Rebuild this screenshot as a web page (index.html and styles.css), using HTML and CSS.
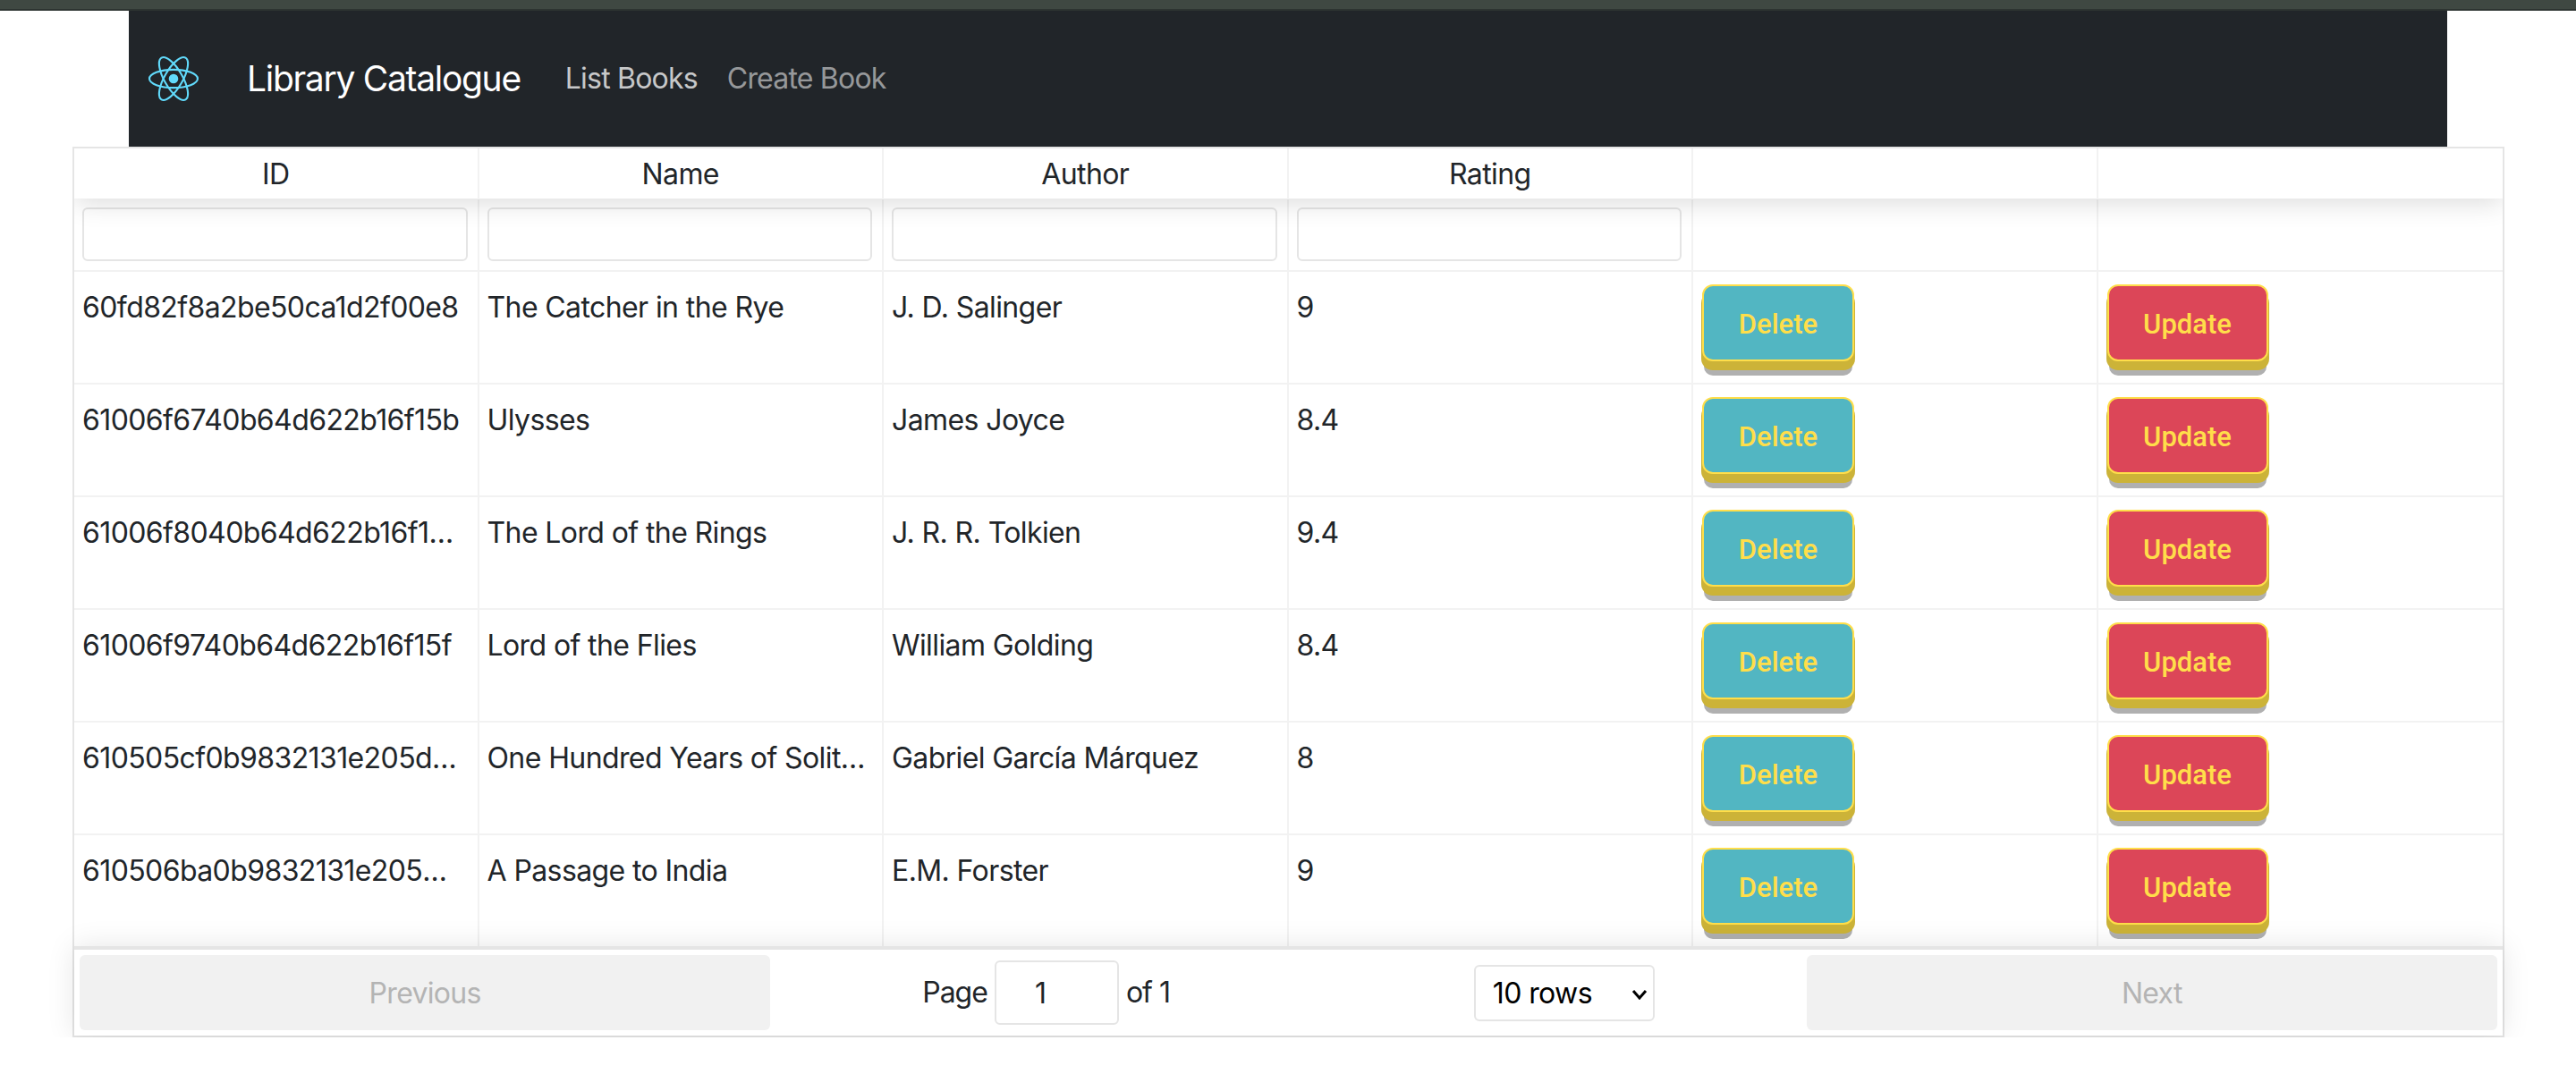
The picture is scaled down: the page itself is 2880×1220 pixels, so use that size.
FILE: index.html
```html
<!DOCTYPE html>
<html lang="en">
<head>
    <meta charset="UTF-8">
    <title>Library Catalogue</title>
    <link rel="stylesheet" href="styles.css">
</head>
<body>
    <div class="top-strip"></div>

    <nav class="navbar">
        <svg class="logo" viewBox="0 0 60 54" aria-hidden="true">
            <g fill="none" stroke="#61dafb" stroke-width="2.2">
                <ellipse cx="30" cy="27" rx="28" ry="10.5"/>
                <ellipse cx="30" cy="27" rx="28" ry="10.5" transform="rotate(60 30 27)"/>
                <ellipse cx="30" cy="27" rx="28" ry="10.5" transform="rotate(120 30 27)"/>
            </g>
            <circle cx="30" cy="27" r="5.5" fill="#61dafb"/>
        </svg>
        <a class="brand" href="#">Library Catalogue</a>
        <a class="nav-link" href="#">List Books</a>
        <a class="nav-link muted" href="#">Create Book</a>
    </nav>

    <div class="react-table">
        <div class="rt-table">
            <div class="rt-row rt-head">
                <div class="rt-th">ID</div>
                <div class="rt-th">Name</div>
                <div class="rt-th">Author</div>
                <div class="rt-th">Rating</div>
                <div class="rt-th"></div>
                <div class="rt-th"></div>
            </div>
            <div class="rt-row rt-filters">
                <div class="rt-td"><input class="filter" type="text"></div>
                <div class="rt-td"><input class="filter" type="text"></div>
                <div class="rt-td"><input class="filter" type="text"></div>
                <div class="rt-td"><input class="filter" type="text"></div>
                <div class="rt-td"></div>
                <div class="rt-td"></div>
            </div>

            <div class="rt-row">
                <div class="rt-td">60fd82f8a2be50ca1d2f00e8</div>
                <div class="rt-td">The Catcher in the Rye</div>
                <div class="rt-td">J. D. Salinger</div>
                <div class="rt-td">9</div>
                <div class="rt-td"><button class="btn btn-delete">Delete</button></div>
                <div class="rt-td"><button class="btn btn-update">Update</button></div>
            </div>
            <div class="rt-row">
                <div class="rt-td">61006f6740b64d622b16f15b</div>
                <div class="rt-td">Ulysses</div>
                <div class="rt-td">James Joyce</div>
                <div class="rt-td">8.4</div>
                <div class="rt-td"><button class="btn btn-delete">Delete</button></div>
                <div class="rt-td"><button class="btn btn-update">Update</button></div>
            </div>
            <div class="rt-row">
                <div class="rt-td clip">61006f8040b64d622b16f15d</div>
                <div class="rt-td">The Lord of the Rings</div>
                <div class="rt-td">J. R. R. Tolkien</div>
                <div class="rt-td">9.4</div>
                <div class="rt-td"><button class="btn btn-delete">Delete</button></div>
                <div class="rt-td"><button class="btn btn-update">Update</button></div>
            </div>
            <div class="rt-row">
                <div class="rt-td">61006f9740b64d622b16f15f</div>
                <div class="rt-td">Lord of the Flies</div>
                <div class="rt-td">William Golding</div>
                <div class="rt-td">8.4</div>
                <div class="rt-td"><button class="btn btn-delete">Delete</button></div>
                <div class="rt-td"><button class="btn btn-update">Update</button></div>
            </div>
            <div class="rt-row">
                <div class="rt-td clip-wide">610505cf0b9832131e205d4a</div>
                <div class="rt-td">One Hundred Years of Solitude</div>
                <div class="rt-td">Gabriel García Márquez</div>
                <div class="rt-td">8</div>
                <div class="rt-td"><button class="btn btn-delete">Delete</button></div>
                <div class="rt-td"><button class="btn btn-update">Update</button></div>
            </div>
            <div class="rt-row last">
                <div class="rt-td clip">610506ba0b9832131e205d4c</div>
                <div class="rt-td">A Passage to India</div>
                <div class="rt-td">E.M. Forster</div>
                <div class="rt-td">9</div>
                <div class="rt-td"><button class="btn btn-delete">Delete</button></div>
                <div class="rt-td"><button class="btn btn-update">Update</button></div>
            </div>
        </div>

        <div class="pagination">
            <button class="page-btn" disabled>Previous</button>
            <div class="page-center">
                <span class="page-info">Page <input class="page-jump" type="text" value="1"> of 1</span>
                <span class="page-size">
                    <select class="page-select">
                        <option>10 rows</option>
                    </select>
                    <svg class="chevron" viewBox="0 0 18 12" aria-hidden="true">
                        <path d="M2 2l7 8 7-8" fill="none" stroke="#000" stroke-width="3"/>
                    </svg>
                </span>
            </div>
            <button class="page-btn" disabled>Next</button>
        </div>
    </div>
</body>
</html>
```

FILE: styles.css
```css
body {
    margin: 0;
    background-color: #fff;
    color: #212529;
    font-family: Inter, "Liberation Sans", sans-serif;
    font-size: 32px;
    line-height: 48px;
    letter-spacing: -0.6px;
}

.top-strip {
    height: 10px;
    background-color: #3f4842;
    border-bottom: 2px solid #2d3431;
}

/* navbar */
.navbar {
    display: flex;
    align-items: center;
    width: 2592px;
    height: 152px;
    margin: 0 auto;
    background-color: #212529;
}

.logo {
    width: 58px;
    height: 52px;
    margin-left: 21px;
}

.brand {
    margin-left: 53px;
    margin-right: 50px;
    color: #fff;
    font-size: 39px;
    letter-spacing: -1.3px;
    text-decoration: none;
}

.nav-link {
    margin-right: 33px;
    color: rgba(255, 255, 255, 0.75);
    letter-spacing: -0.8px;
    text-decoration: none;
}

.nav-link.muted {
    color: rgba(255, 255, 255, 0.55);
}

/* table */
.react-table {
    width: 2719px;
    margin-left: 81px;
    box-sizing: border-box;
    border: 2px solid #e5e5e5;
}

.rt-table {
    overflow: hidden;
}

.rt-row {
    display: grid;
    grid-template-columns: repeat(6, minmax(0, 1fr));
    height: 124px;
    border-bottom: 2px solid #f2f2f2;
}

.rt-row.last {
    border-bottom: none;
}

.rt-head {
    position: relative;
    z-index: 1;
    height: 56px;
    border-bottom: none;
    background-color: #fff;
    box-shadow: 0 4px 30px rgba(0, 0, 0, 0.15);
}

.rt-filters {
    height: 80px;
}

.rt-th {
    border-right: 2px solid #f2f2f2;
    text-align: center;
    line-height: 57px;
}

.rt-td {
    padding: 16px 11px 12px 9px;
    border-right: 2px solid #f2f2f2;
    overflow: hidden;
    white-space: nowrap;
    text-overflow: ellipsis;
}

/* these ids run out of room a little sooner */
.rt-td.clip {
    padding-right: 24px;
}

.rt-td.clip-wide {
    padding-right: 18px;
}

.rt-th:last-child,
.rt-td:last-child {
    border-right: none;
}

.rt-filters .rt-td {
    padding: 10px 11px 10px 9px;
}

.filter {
    display: block;
    width: 100%;
    height: 60px;
    box-sizing: border-box;
    border: 2px solid #e5e5e5;
    border-radius: 6px;
    outline: none;
    background-color: #fff;
}

/* buttons */
.btn {
    height: 86px;
    margin: -2px 0 0 1px;
    padding: 2px 0 0;
    border: 2px solid #ffde4a;
    border-radius: 12px;
    color: #ffde4a;
    font-family: Roboto, sans-serif;
    font-size: 31px;
    font-weight: 500;
    box-shadow: 0 9px 0 1px #ccb338, 0 18px 0 -2px #b0b0b0;
}

.btn-delete {
    width: 170px;
    background-color: #52b6c2;
}

.btn-update {
    width: 180px;
    background-color: #dc4658;
}

/* pagination */
.pagination {
    position: relative;
    z-index: 1;
    display: flex;
    align-items: stretch;
    height: 84px;
    padding: 6px;
    border-top: 4px solid #e5e5e5;
    background-color: #fff;
    box-shadow: 0 0 30px rgba(0, 0, 0, 0.1);
}

.page-btn {
    flex: 1 1 0;
    padding: 0;
    border: none;
    border-radius: 6px;
    background-color: #f1f1f1;
    color: #b4b4b4;
    font-family: inherit;
    font-size: 32px;
    letter-spacing: -0.7px;
}

.page-center {
    flex: 1.5 1 0;
    display: flex;
    align-items: center;
    justify-content: space-around;
}

.page-info {
    display: flex;
    align-items: center;
    gap: 8px;
    letter-spacing: -1px;
    white-space: nowrap;
}

.page-jump {
    width: 139px;
    height: 72px;
    box-sizing: border-box;
    padding: 0 36px 0 0;
    border: 2px solid #e5e5e5;
    border-radius: 6px;
    outline: none;
    color: #212529;
    font-family: inherit;
    font-size: 32px;
    text-align: center;
}

.page-size {
    position: relative;
    display: block;
    height: 63px;
}

.page-select {
    display: block;
    width: 202px;
    height: 63px;
    padding: 0 0 0 19px;
    border: 2px solid #e5e5e5;
    border-radius: 6px;
    outline: none;
    appearance: none;
    background-color: #fff;
    color: #000;
    font-family: inherit;
    font-size: 32px;
    letter-spacing: -0.6px;
}

.chevron {
    position: absolute;
    top: 27px;
    right: 8px;
    width: 18px;
    height: 12px;
}
```
